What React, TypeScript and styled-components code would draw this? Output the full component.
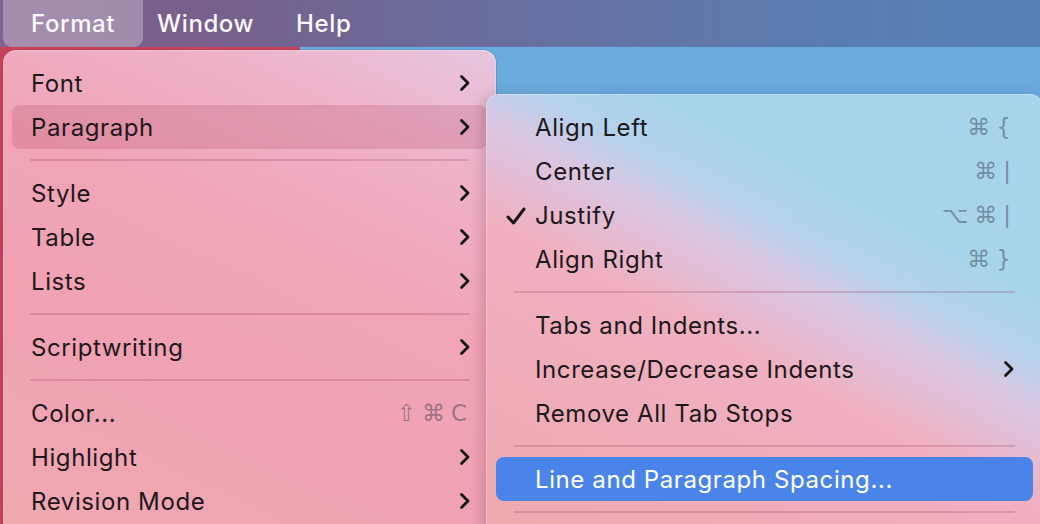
import styled, { createGlobalStyle } from 'styled-components'

const GlobalStyle = createGlobalStyle`
    html, body {
        margin: 0;
        padding: 0;
        width: 1040px;
        height: 524px;
        overflow: hidden;
        font-family: Inter, 'Noto Sans', 'DejaVu Sans', sans-serif;
    }
`

type Item =
    | { kind: 'sep' }
    | { kind: 'item'; label: string; sub?: boolean; keys?: string[]; checked?: boolean; active?: boolean; selected?: boolean }

const formatItems: Item[] = [
    { kind: 'item', label: 'Font', sub: true },
    { kind: 'item', label: 'Paragraph', sub: true, active: true },
    { kind: 'sep' },
    { kind: 'item', label: 'Style', sub: true },
    { kind: 'item', label: 'Table', sub: true },
    { kind: 'item', label: 'Lists', sub: true },
    { kind: 'sep' },
    { kind: 'item', label: 'Scriptwriting', sub: true },
    { kind: 'sep' },
    { kind: 'item', label: 'Color...', keys: ['⇧', '⌘', 'C'] },
    { kind: 'item', label: 'Highlight', sub: true },
    { kind: 'item', label: 'Revision Mode', sub: true },
]

const paragraphItems: Item[] = [
    { kind: 'item', label: 'Align Left', keys: ['⌘', '{'] },
    { kind: 'item', label: 'Center', keys: ['⌘', '|'] },
    { kind: 'item', label: 'Justify', keys: ['⌥', '⌘', '|'], checked: true },
    { kind: 'item', label: 'Align Right', keys: ['⌘', '}'] },
    { kind: 'sep' },
    { kind: 'item', label: 'Tabs and Indents...' },
    { kind: 'item', label: 'Increase/Decrease Indents', sub: true },
    { kind: 'item', label: 'Remove All Tab Stops' },
    { kind: 'sep' },
    { kind: 'item', label: 'Line and Paragraph Spacing...', selected: true },
    { kind: 'sep' },
]

const Chevron = () => (
    <svg width='12' height='18' viewBox='0 0 12 18'>
        <polyline points='2.5,2.5 9,9 2.5,15.5' fill='none' stroke='#111' strokeWidth='2.8' strokeLinecap='round' strokeLinejoin='round' />
    </svg>
)

const Check = () => (
    <svg width='22' height='20' viewBox='0 0 22 20'>
        <polyline points='3,11 8.5,17 19,3' fill='none' stroke='#1a1418' strokeWidth='3' strokeLinecap='round' strokeLinejoin='round' />
    </svg>
)

const MenuList = ({ items, checkColumn }: { items: Item[]; checkColumn?: boolean }) => (
    <>
        {items.map((item, i) =>
            item.kind === 'sep' ? (
                <Separator key={i} />
            ) : (
                <Row key={i} $active={item.active} $selected={item.selected} $check={checkColumn}>
                    {checkColumn && <CheckSlot>{item.checked && <Check />}</CheckSlot>}
                    <Label $selected={item.selected}>{item.label}</Label>
                    {item.keys && (
                        <Shortcut>
                            {item.keys.map((k, j) => (
                                <Key key={j}>{k}</Key>
                            ))}
                        </Shortcut>
                    )}
                    {item.sub && (
                        <ChevronSlot>
                            <Chevron />
                        </ChevronSlot>
                    )}
                </Row>
            ),
        )}
    </>
)

export default function App() {
    return (
        <Screen>
            <GlobalStyle />
            <MenuBar>
                <BarItem $open>Format</BarItem>
                <BarItem>Window</BarItem>
                <BarItem>Help</BarItem>
            </MenuBar>
            <Desktop>
                <FormatMenu>
                    <MenuList items={formatItems} />
                </FormatMenu>
                <SubMenu>
                    <MenuList items={paragraphItems} checkColumn />
                </SubMenu>
            </Desktop>
        </Screen>
    )
}

const Screen = styled.div`
    width: 1040px;
    height: 524px;
    display: flex;
    flex-direction: column;
    overflow: hidden;
`

const MenuBar = styled.div`
    height: 47px;
    flex-shrink: 0;
    display: flex;
    align-items: stretch;
    padding-left: 3px;
    background: linear-gradient(90deg, #82628e 0%, #77608c 20%, #6870a0 50%, #5a7db0 80%, #5580b4 100%);
    position: relative;
    z-index: 2;
`

const BarItem = styled.div<{ $open?: boolean }>`
    display: flex;
    align-items: center;
    padding: ${(p) => (p.$open ? '0 28px' : '0 21px')};
    margin-right: ${(p) => (p.$open ? '-7px' : '0')};
    font-size: 24px;
    font-weight: 500;
    color: #fbf8fc;
    border-radius: 0 0 9px 9px;
    background: ${(p) => (p.$open ? 'rgba(255, 255, 255, 0.28)' : 'transparent')};
    letter-spacing: 0.6px;
`

const Desktop = styled.div`
    flex: 1;
    position: relative;
    overflow: hidden;
    background:
        linear-gradient(164deg, transparent 0 62%, rgba(40, 80, 140, 0.06) 62%),
        linear-gradient(90deg, #c8405a 0 300px, #6aabdf 300px);
`

const Menu = styled.div`
    border-radius: 13px;
    padding: 11px 9px;
    box-sizing: border-box;
    box-shadow:
        inset 0 0 0 1px rgba(255, 255, 255, 0.25),
        0 0 0 0.5px rgba(0, 0, 0, 0.2);
`

const FormatMenu = styled(Menu)`
    margin: 3px 0 0 3px;
    width: 493px;
    height: 520px;
    background: linear-gradient(205deg, #e6c6de 0%, #eeb2c8 18%, #f0a4b6 40%, #f0a2b2 65%, #f0aab0 100%);
`

const SubMenu = styled(Menu)`
    position: absolute;
    left: 486px;
    top: 47px;
    width: 557px;
    height: 450px;
    padding: 11px 10px;
    background: linear-gradient(28deg, #eea8ae 0%, #f0b0c0 44%, #dac6e2 57%, #b4d2ec 64%, #a8d4ea 72%, #a6d4ea 100%);
    box-shadow:
        inset 0 0 0 1px rgba(255, 255, 255, 0.25),
        -3px 2px 14px rgba(80, 20, 40, 0.22);
`

const Row = styled.div<{ $active?: boolean; $selected?: boolean; $check?: boolean }>`
    height: 44px;
    display: flex;
    align-items: center;
    padding: ${(p) => (p.$check ? '0 20px 0 9px' : '0 18px 0 19px')};
    border-radius: 8px;
    background: ${(p) => (p.$selected ? '#4a84e8' : p.$active ? 'rgba(150, 30, 60, 0.16)' : 'transparent')};
`

const CheckSlot = styled.div`
    width: 30px;
    display: flex;
    align-items: center;
    justify-content: flex-start;
    margin-top: 1px;
`

const Label = styled.span<{ $selected?: boolean }>`
    flex: 1;
    font-size: 24px;
    color: ${(p) => (p.$selected ? '#ffffff' : '#1d181b')};
    white-space: nowrap;
    letter-spacing: 0.6px;
`

const Shortcut = styled.span`
    display: flex;
    gap: 6px;
    align-items: center;
    color: rgba(40, 40, 60, 0.42);
    font-family: 'DejaVu Sans', sans-serif;
    font-size: 23px;
    margin-right: 2px;
`

const Key = styled.span`
    line-height: 1;
`

const ChevronSlot = styled.div`
    display: flex;
    align-items: center;
    margin-right: -2px;
`

const Separator = styled.div`
    height: 22px;
    display: flex;
    align-items: center;
    margin: 0 18px;
    &::after {
        content: '';
        flex: 1;
        height: 1.5px;
        background: rgba(120, 30, 60, 0.18);
    }
`
